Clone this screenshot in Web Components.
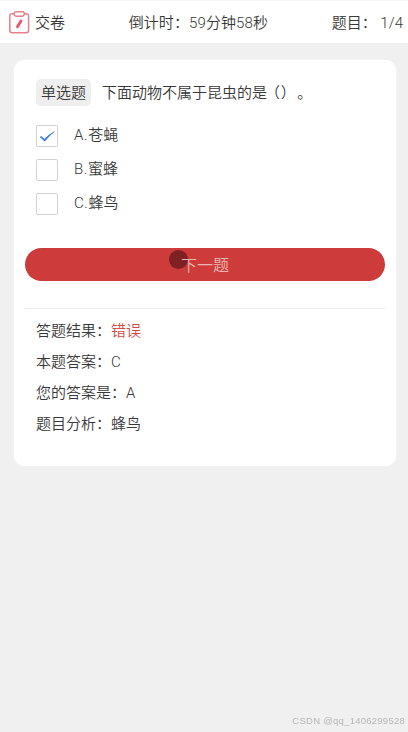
<!DOCTYPE html>
<html lang="zh-CN">
<head>
<meta charset="utf-8">
<title>答题</title>
<style>
html,body{margin:0;height:100%;background:#f0f0f0}
body{font:350 15px/22px Roboto,"Noto Sans CJK SC",sans-serif;font-weight:350;color:#383838;text-spacing-trim:space-all}
</style>
</head>
<body>
<quiz-app></quiz-app>
<script>
const define = (name, html) => customElements.define(name, class extends HTMLElement {
  constructor() {
    super();
    this.attachShadow({mode: 'open'}).innerHTML = html;
  }
});

define('submit-icon', `<style>:host{display:block;width:22px;height:24px}svg{display:block}</style>
<svg width="22" height="24" viewBox="0 0 22 24" fill="none" stroke="#e3808b" stroke-width="1.5">
<path d="M6 2.8H4.2Q1.8 2.8 1.8 5V19.6Q1.8 21.8 4.2 21.8H18.2Q20.6 21.8 20.6 19.6V5Q20.6 2.8 18.2 2.8H16.4"/>
<path d="M7.8 .8H14.6Q16.4 .8 16.3 3Q16 5.3 13.9 5.3H8.5Q6.4 5.3 6.1 3Q6 .8 7.8 .8Z"/>
<path d="M13 10L9.4 15.8" stroke="#ee5268" stroke-width="2.7" stroke-linecap="round"/></svg>`);

define('quiz-header', `<style>
:host{display:flex;justify-content:space-between;align-items:center;box-sizing:border-box;height:43px;padding:1px 5px 0 8px;background:#fff;border-top:1px solid #f5f5f5}
.submit{display:flex;align-items:center;gap:5px}
</style><div class="submit"><submit-icon></submit-icon><slot name="submit"></slot></div>
<slot name="timer"></slot><slot name="count"></slot>`);

define('quiz-card', `<style>
:host{display:block;box-sizing:border-box;margin:17px 12px 0 14px;height:406px;padding:19px 11px 0;background:#fff;border-radius:11px;box-shadow:0 0 2px #fafafa}
</style><slot></slot>`);

define('quiz-question', `<style>
:host{display:flex;align-items:center;gap:11px;height:27px;padding-left:11px;white-space:nowrap}
.tag{height:27px;line-height:28px;padding:0 5px;background:#eeeeee;border-radius:5px}
</style><span class="tag"><slot name="type"></slot></span><slot></slot>`);

define('quiz-option', `<style>
:host{display:flex;gap:16px;height:22px;margin-bottom:12px;padding-left:11px}
.box{box-sizing:border-box;width:22px;height:22px;border:1px solid #d2d2d4;border-radius:2px}
svg{display:none}
:host([checked]) svg{display:block}
.label{line-height:20px}
.key{letter-spacing:.6px}
</style><span class="box"><svg width="20" height="20" viewBox="0 0 20 20"><path d="M2.8 11L4.2 9.9L7.4 13Q12 8.2 17.2 5.2L17.6 5.8Q12 10 7.8 15.6Z" fill="#3478e5"/></svg></span><span class="label"><span class="key"><slot name="key"></slot></span><slot></slot></span>`);

define('next-button', `<style>
:host{display:block;position:relative;height:33px;line-height:35px;margin-top:33px;border-radius:17px;background:#cd3c3a;color:#edb3b1;font-size:16px;text-align:center}
.touch{position:absolute;left:144px;top:2px;width:19px;height:19px;border-radius:50%;background:#7f2022}
.text{position:relative}
</style><span class="touch"></span><span class="text"><slot></slot></span>`);

define('quiz-results', `<style>
:host{display:block;margin-top:27px;padding:7px 11px 0;border-top:1px solid #ededed}
</style><slot></slot>`);

define('result-row', `<style>
:host{display:block;height:31px;line-height:31px}
:host([wrong]) .value{color:#d24b47}
</style><span><slot name="label"></slot></span><span class="value"><slot></slot></span>`);

define('page-credit', `<style>
:host{position:fixed;right:3px;bottom:5px;font:400 9.5px/13px "Liberation Sans",sans-serif;letter-spacing:.25px;color:#b6b6b6}
</style><slot></slot>`);

define('quiz-app', `<style>:host{display:block}.time{letter-spacing:.1px}.count{white-space:pre}.gap{height:19px}.paren{margin:0 1px 0 -2px;letter-spacing:.6px}</style>
<quiz-header><span slot="submit">交卷</span><span slot="timer" class="time">倒计时：59分钟58秒</span><span slot="count" class="count">题目： 1/4</span></quiz-header>
<quiz-card>
<quiz-question><span slot="type">单选题</span><span>下面动物不属于昆虫的是<span class="paren">（）</span>。</span></quiz-question>
<div class="gap"></div>
<quiz-option checked><span slot="key">A.</span>苍蝇</quiz-option><quiz-option><span slot="key">B.</span>蜜蜂</quiz-option><quiz-option><span slot="key">C.</span>蜂鸟</quiz-option>
<next-button>下一题</next-button>
<quiz-results>
<result-row wrong><span slot="label">答题结果：</span>错误</result-row>
<result-row><span slot="label">本题答案：</span>C</result-row>
<result-row><span slot="label">您的答案是：</span>A</result-row>
<result-row><span slot="label">题目分析：</span>蜂鸟</result-row>
</quiz-results>
</quiz-card>
<page-credit>CSDN @qq_1406299528</page-credit>`);
</script>
</body>
</html>
